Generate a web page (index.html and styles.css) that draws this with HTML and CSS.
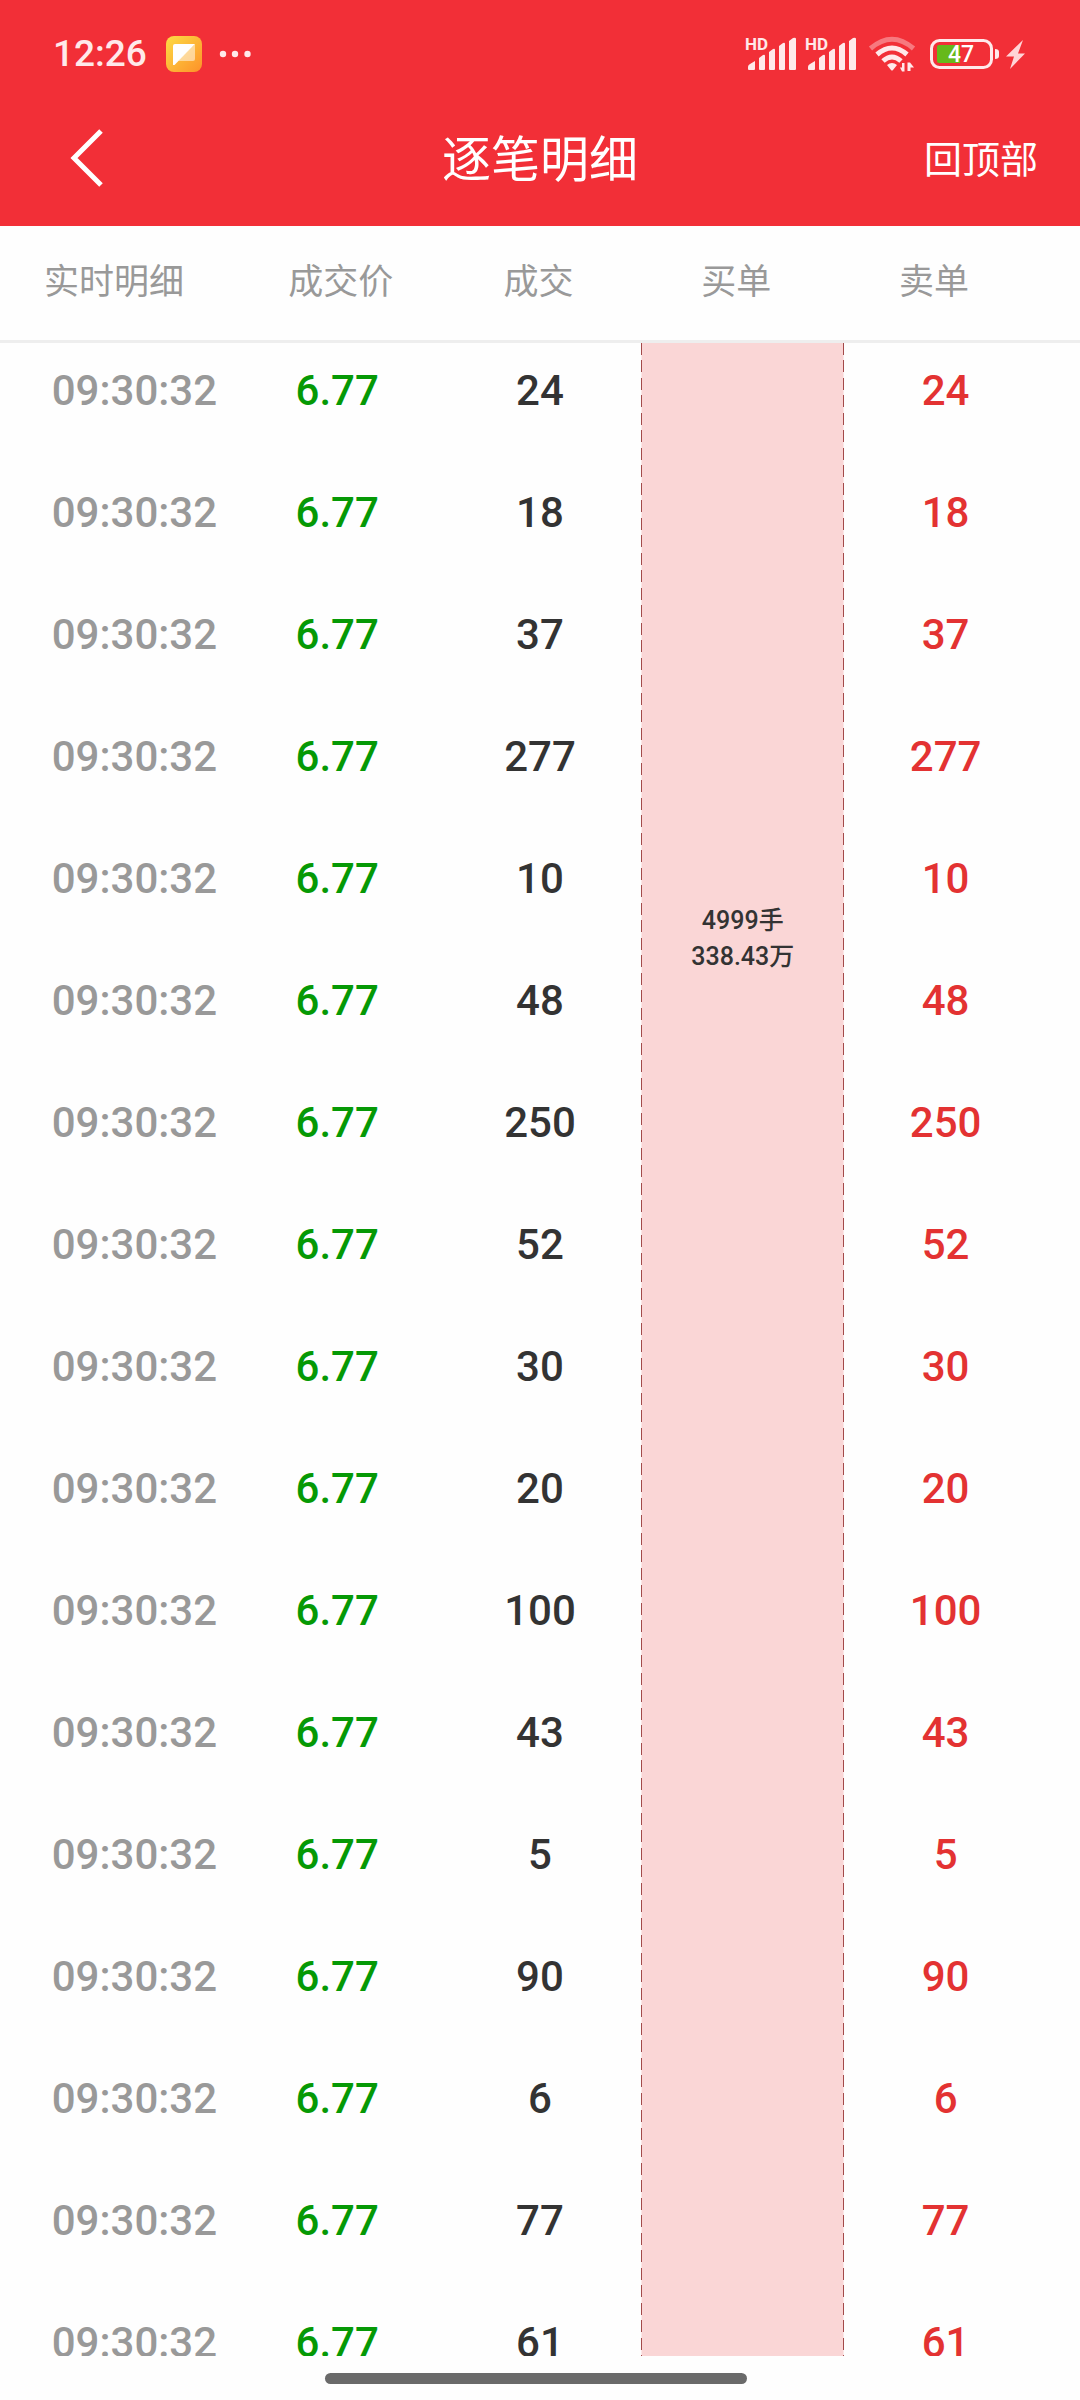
FILE: index.html
```
<!DOCTYPE html>
<html lang="zh-CN">
<head>
    <meta charset="UTF-8">
    <meta name="viewport" content="width=device-width, initial-scale=1.0">
    <title>逐笔明细</title>
    <link rel="stylesheet" href="styles.css">
</head>
<body>
  <div class="app">
    <header class="top">
      <div class="status">
        <div class="status-left">
          <span class="clock">12:26</span>
          <svg class="app-icon" width="36" height="36" viewBox="0 0 36 36" aria-hidden="true">
            <defs>
              <linearGradient id="note" x1="0" y1="0" x2="1" y2="1">
                <stop offset="0" stop-color="#fddc45"/>
                <stop offset="1" stop-color="#fd9129"/>
              </linearGradient>
            </defs>
            <rect width="36" height="36" rx="8" fill="url(#note)"/>
            <path d="M29 8v15a2 2 0 0 1-2 2H12z" fill="#fff" opacity=".5"/>
            <path d="M7 10a2 2 0 0 1 2-2h20L8.500 29H7z" fill="#fff"/>
          </svg>
          <svg width="32" height="8" viewBox="0 0 32 8" fill="#ffe9ea" aria-hidden="true">
            <circle cx="4" cy="4" r="3.200"/>
            <circle cx="16" cy="4" r="3.200"/>
            <circle cx="28.500" cy="4" r="3.200"/>
          </svg>
        </div>
        <div class="status-right">
          <svg class="signal" width="50" height="34" viewBox="0 0 50 34" aria-hidden="true">
            <text x="-1" y="13">HD</text>
            <path d="M2 32v-2q0-2 2-3l5-3v8q0 1-1 1H3q-1 0-1-1zM13 32V21l4-3q2-1 2 1v13q0 1-1 1h-4q-1 0-1-1zM23 32V15l4-3q2-1 2 1v19q0 1-1 1h-4q-1 0-1-1zM33 32V9l4-3q2-1 2 1v25q0 1-1 1h-4q-1 0-1-1zM43 32V4l4-3q3-1 3 1v30q0 1-1 1h-5q-1 0-1-1z"/>
          </svg>
          <svg class="signal" width="50" height="34" viewBox="0 0 50 34" aria-hidden="true">
            <text x="-1" y="13">HD</text>
            <path d="M2 32v-2q0-2 2-3l5-3v8q0 1-1 1H3q-1 0-1-1zM13 32V21l4-3q2-1 2 1v13q0 1-1 1h-4q-1 0-1-1zM23 32V15l4-3q2-1 2 1v19q0 1-1 1h-4q-1 0-1-1zM33 32V9l4-3q2-1 2 1v25q0 1-1 1h-4q-1 0-1-1zM43 32V4l4-3q3-1 3 1v30q0 1-1 1h-5q-1 0-1-1z"/>
          </svg>
          <svg class="wifi" width="48" height="36" viewBox="0 0 48 36" aria-hidden="true">
            <g fill="none" stroke="#ffe9ea" stroke-width="5">
              <path d="M2.500 12.500Q24-6 45.500 12.500" opacity=".4"/>
              <path d="M9 18.500q15-13 30 0"/>
              <path d="M15 25q9-8 18 0"/>
            </g>
            <path d="M19 29q5-4 10 0l-4 5q-1 1-2 0zM36.500 27v8.500h-2.500l-2-4h2V27zM39.500 35V26.500H42l4 5h-3.500V35z" fill="#ffe9ea"/>
          </svg>
          <svg class="battery" width="96" height="32" viewBox="0 0 96 32" aria-hidden="true">
            <rect x="1.500" y="2.500" width="60" height="27" rx="8" fill="none" stroke="#ffe9ea" stroke-width="3"/>
            <path d="M9 7h21v18H9q-2 0-2-2V9q0-2 2-2z" fill="#66b91a"/>
            <path d="M65 11q4 0 4 3v4q0 3-4 3z" fill="#ffe9ea"/>
            <text x="18" y="24">47</text>
            <path d="M93 2L76 18.500h8L80 31l15-15.500h-7z" fill="#ffd5d7"/>
          </svg>
        </div>
      </div>
      <div class="title-bar">
        <button class="back" type="button" aria-label="返回">
          <svg width="36" height="64" viewBox="0 0 36 64" aria-hidden="true">
            <path d="M32 4L5 31l27 27" fill="none" stroke="#fff" stroke-width="5"/>
          </svg>
        </button>
        <h1>逐笔明细</h1>
        <button class="to-top" type="button">回顶部</button>
      </div>
    </header>

    <table class="head">
      <tr>
        <th scope="col">实时明细</th>
        <th scope="col">成交价</th>
        <th scope="col">成交</th>
        <th scope="col">买单</th>
        <th scope="col">卖单</th>
      </tr>
    </table>

    <main class="list">
      <table class="trades">
        <tr>
          <td class="time">09:30:32</td><td class="price">6.77</td><td>24</td>
          <td class="order" rowspan="17">4999手<br>338.43万</td>
          <td class="sell">24</td>
        </tr>
        <tr><td class="time">09:30:32</td><td class="price">6.77</td><td>18</td><td class="sell">18</td></tr>
        <tr><td class="time">09:30:32</td><td class="price">6.77</td><td>37</td><td class="sell">37</td></tr>
        <tr><td class="time">09:30:32</td><td class="price">6.77</td><td>277</td><td class="sell">277</td></tr>
        <tr><td class="time">09:30:32</td><td class="price">6.77</td><td>10</td><td class="sell">10</td></tr>
        <tr><td class="time">09:30:32</td><td class="price">6.77</td><td>48</td><td class="sell">48</td></tr>
        <tr><td class="time">09:30:32</td><td class="price">6.77</td><td>250</td><td class="sell">250</td></tr>
        <tr><td class="time">09:30:32</td><td class="price">6.77</td><td>52</td><td class="sell">52</td></tr>
        <tr><td class="time">09:30:32</td><td class="price">6.77</td><td>30</td><td class="sell">30</td></tr>
        <tr><td class="time">09:30:32</td><td class="price">6.77</td><td>20</td><td class="sell">20</td></tr>
        <tr><td class="time">09:30:32</td><td class="price">6.77</td><td>100</td><td class="sell">100</td></tr>
        <tr><td class="time">09:30:32</td><td class="price">6.77</td><td>43</td><td class="sell">43</td></tr>
        <tr><td class="time">09:30:32</td><td class="price">6.77</td><td>5</td><td class="sell">5</td></tr>
        <tr><td class="time">09:30:32</td><td class="price">6.77</td><td>90</td><td class="sell">90</td></tr>
        <tr><td class="time">09:30:32</td><td class="price">6.77</td><td>6</td><td class="sell">6</td></tr>
        <tr><td class="time">09:30:32</td><td class="price">6.77</td><td>77</td><td class="sell">77</td></tr>
        <tr><td class="time">09:30:32</td><td class="price">6.77</td><td>61</td><td class="sell">61</td></tr>
      </table>
    </main>

    <div class="gesture"><span class="pill"></span></div>
  </div>
</body>
</html>
```

FILE: styles.css
```
* {
    box-sizing: border-box;
}
body {
    margin: 0;
    background: #fefefe;
    color: #333;
    font-family: Roboto, "Noto Sans CJK SC", sans-serif;
}
.app {
    display: flex;
    flex-direction: column;
    height: 100vh;
}
.top {
    background: #f22f37;
    color: #fff;
}
.status {
    display: flex;
    justify-content: space-between;
    align-items: center;
    height: 92px;
    padding: 16px 54px 0 53px;
}
.status-left,
.status-right {
    display: flex;
    align-items: center;
}
.clock {
    color: #ffe9ea;
    font-size: 37px;
    font-weight: 500;
    line-height: 40px;
}
.app-icon {
    margin: 0 17px 0 19px;
}
.signal {
    margin-right: 10px;
    fill: #ffe9ea;
    font-size: 17px;
    font-weight: 700;
    overflow: visible;
}
.wifi {
    margin: 0 14px 0 2px;
}
.battery {
    fill: #fff;
    font-size: 23px;
    font-weight: 500;
}
.title-bar {
    display: grid;
    grid-template-columns: 1fr auto 1fr;
    align-items: center;
    height: 134px;
    padding: 0 42px;
}
.title-bar button {
    padding: 0;
    border: none;
    background: none;
    color: inherit;
    font-family: inherit;
    cursor: pointer;
}
.title-bar .back {
    display: flex;
    justify-self: start;
    padding-left: 27px;
}
h1 {
    margin: 0;
    padding-top: 4px;
    font-size: 49px;
    font-weight: 400;
    line-height: 60px;
}
.title-bar .to-top {
    justify-self: end;
    padding-top: 2px;
    font-size: 38px;
    line-height: 48px;
}
table {
    width: 100%;
    border-collapse: collapse;
    table-layout: fixed;
}
td,
th {
    padding: 0;
    text-align: center;
}
.head {
    display: block;
    flex: none;
    padding: 0 47px 0 44px;
    border-bottom: 3px solid #eee;
}
.head tbody,
.head tr {
    display: flex;
    width: 100%;
}
.head th {
    flex: 1;
    color: #999;
    font-size: 35px;
    font-weight: 400;
    line-height: 114px;
}
.head th:first-child {
    text-align: left;
}
.list {
    flex: 1;
    min-height: 0;
    padding: 0 33px;
    overflow: hidden;
}
.trades td {
    padding-bottom: 26px;
    font-size: 42px;
    font-weight: 500;
    line-height: 96px;
    vertical-align: top;
}
.trades .time {
    color: #999;
}
.trades .price {
    color: #059905;
}
.trades .sell {
    color: #e33232;
}
/* merged buy order, dashed line down both sides */
.trades .order {
    padding: 560px 0 0;
    background:
        repeating-linear-gradient(#a34a4a 0 12px, #fce8e8 12px 17px, #a34a4a 17px 29px, #fce8e8 29px 35px) left / 1px 100% no-repeat,
        repeating-linear-gradient(#a34a4a 0 12px, #fce8e8 12px 17px, #a34a4a 17px 29px, #fce8e8 29px 35px) right / 1px 100% no-repeat,
        #fad6d6;
    font-size: 25px;
    line-height: 36px;
}
.gesture {
    display: flex;
    flex: none;
    justify-content: center;
    height: 44px;
    padding-top: 17px;
}
.pill {
    width: 39%;
    height: 11px;
    margin-right: 8px;
    border-radius: 6px;
    background: #6a6a6a;
}
```
